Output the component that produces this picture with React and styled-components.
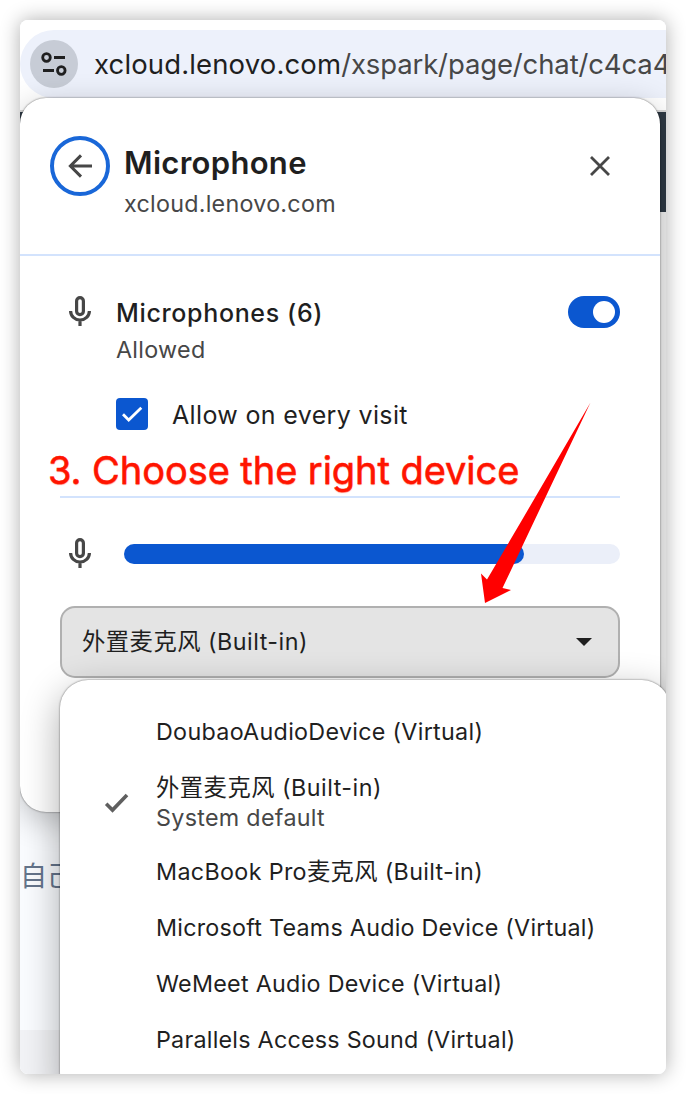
import React from "react";
import styled, { createGlobalStyle } from "styled-components";

const GlobalStyle = createGlobalStyle`
  * { box-sizing: border-box; }
  body {
    margin: 0;
    background: #fff;
    font-family: Inter, "Noto Sans CJK SC", sans-serif;
    color: #1f1f1f;
  }
`;

const Page = styled.main`
  width: 686px;
  height: 1094px;
  padding: 20px;
  overflow: hidden;
`;

const Frame = styled.section`
  position: relative;
  width: 646px;
  height: 1054px;
  border-radius: 8px;
  box-shadow: 0 0 20px rgba(0, 0, 0, 0.32);
`;

const Viewport = styled.div`
  position: relative;
  height: 100%;
  border-radius: 8px;
  overflow: hidden;
  display: flex;
  flex-direction: column;
  background: #f8f9fd;
`;

const Toolbar = styled.header`
  flex: none;
  height: 92px;
  padding-top: 10px;
  background: #fff;
  border-bottom: 2px solid #d6d6d6;
`;

const AddressBar = styled.div`
  width: 760px;
  height: 68px;
  padding-left: 10px;
  display: flex;
  align-items: center;
  gap: 16px;
  border-radius: 34px 0 0 34px;
  background: #edf1fb;
`;

const SiteButton = styled.div`
  width: 48px;
  height: 48px;
  border-radius: 50%;
  background: #c7ccd6;
`;

const Text = styled.span`
  display: block;
  white-space: nowrap;
  font-size: ${(p) => p.$size || 23.3}px;
  line-height: ${(p) => p.$line || 30}px;
  font-weight: ${(p) => p.$weight || 400};
  letter-spacing: ${(p) => p.$track || 0}px;
  color: ${(p) => p.$color || "#1f1f1f"};
`;

const Muted = styled.span`
  color: #474747;
  letter-spacing: -0.13px;
`;

const SiteHeader = styled.div`
  flex: none;
  height: 100px;
  background: #2e3944;
`;

const SiteBody = styled.div`
  flex: 1;
  padding-top: 646px;
  padding-left: 0;
  background: linear-gradient(#f1f1f1 0 480px, #fafcff 600px);
`;

const SiteFooter = styled.div`
  flex: none;
  height: 44px;
  background: #f2f3f6;
`;

const Dialog = styled.div`
  position: absolute;
  left: 0;
  top: 78px;
  width: 640px;
  height: 714px;
  border-radius: 26px;
  background: #fff;
  box-shadow: 0 0 2px rgba(0, 0, 0, 0.6), 0 8px 32px rgba(0, 0, 0, 0.24);
`;

const DialogHeader = styled.div`
  height: 158px;
  padding: 38px 40px 0 30px;
  display: flex;
  align-items: flex-start;
  border-bottom: 2px solid #d3e3fd;
`;

const BackButton = styled.div`
  width: 60px;
  height: 60px;
  margin-right: 14px;
  display: grid;
  place-items: center;
  border: 4px solid #1967d8;
  border-radius: 50%;
`;

const Titles = styled.div`
  flex: 1;
  padding-top: 7px;
`;

const CloseButton = styled.div`
  width: 40px;
  height: 60px;
  display: grid;
  place-items: center;
`;

const DialogBody = styled.div`
  padding: 40px 40px 0;
`;

const PermissionRow = styled.div`
  display: flex;
  align-items: flex-start;
  height: 70px;
`;

const IconCell = styled.div`
  width: 40px;
  height: 30px;
  margin-right: ${(p) => p.$gap}px;
  display: flex;
  justify-content: center;
`;

const Labels = styled.div`
  flex: 1;
`;

const Toggle = styled.div`
  width: 52px;
  height: 32px;
  padding: 5px;
  display: flex;
  justify-content: flex-end;
  border-radius: 16px;
  background: #0b57d0;
`;

const Knob = styled.div`
  width: 22px;
  height: 22px;
  border-radius: 50%;
  background: #fff;
`;

const CheckRow = styled.div`
  height: 32px;
  margin: 32px 0 0 56px;
  display: flex;
  align-items: flex-start;
  gap: 24px;
`;

const CheckBox = styled.div`
  width: 32px;
  height: 32px;
  border-radius: 4px;
  background: #0b57d0;
`;

const Divider = styled.div`
  height: 2px;
  margin-top: 66px;
  background: #d3e3fd;
`;

const LevelRow = styled.div`
  margin-top: 40px;
  display: flex;
  align-items: flex-start;
  height: 32px;
`;

const LevelTrack = styled.div`
  flex: 1;
  height: 20px;
  margin-top: 6px;
  border-radius: 10px;
  background: #ebeff9;
`;

const LevelFill = styled.div`
  width: 400px;
  height: 20px;
  border-radius: 10px;
  background: #0b57d0;
`;

const Select = styled.div`
  height: 72px;
  margin-top: 36px;
  padding: 0 26px 0 20px;
  display: flex;
  align-items: center;
  justify-content: space-between;
  border: 2px solid #b0b0b0;
  border-radius: 15px;
  background: #e4e4e4;
`;

const Menu = styled.div`
  position: absolute;
  left: 40px;
  top: 660px;
  width: 610px;
  height: 420px;
  padding-top: 24px;
  border-radius: 28px;
  background: #fff;
  box-shadow: 0 0 2px rgba(0, 0, 0, 0.6), 0 12px 38px rgba(0, 0, 0, 0.33);
`;

const MenuItem = styled.div`
  height: ${(p) => (p.$tall ? 84 : 56)}px;
  padding-top: ${(p) => (p.$tall ? 2 : 0)}px;
  padding-left: 44px;
  display: flex;
  align-items: center;
`;

const MenuMark = styled.div`
  width: 52px;
  display: flex;
`;

const Caption = styled.div`
  position: absolute;
  left: 28px;
  top: 425px;
  -webkit-text-stroke: 0.5px #ff1400;
  text-shadow: 0 1px 1px rgba(255, 30, 0, 0.45);
`;

const Pointer = styled.svg`
  position: absolute;
  left: 450px;
  top: 375px;
`;

function MicIcon() {
  return (
    <svg width="24" height="30" viewBox="0 0 24 30" fill="none" stroke="#474747" strokeWidth="3.2">
      <rect x="8.6" y="1.6" width="6.8" height="17" rx="3.4" />
      <path d="M2.6 15a9.4 9 0 0 0 18.8 0M12 24V30" />
    </svg>
  );
}

const devices = [
  { name: "DoubaoAudioDevice (Virtual)", track: 0.3 },
  { name: "外置麦克风 (Built-in)", note: "System default", track: 0.5 },
  { name: "MacBook Pro麦克风 (Built-in)", track: 0.34 },
  { name: "Microsoft Teams Audio Device (Virtual)", track: 0.24 },
  { name: "WeMeet Audio Device (Virtual)", track: 0.28 },
  { name: "Parallels Access Sound (Virtual)", track: 0.24 },
];

export default function App() {
  return (
    <Page>
      <GlobalStyle />
      <Frame>
        <Viewport>
          <Toolbar>
            <AddressBar>
              <SiteButton>
                <svg width="48" height="48" viewBox="0 0 48 48" fill="none" stroke="#1f1f1f" strokeWidth="2.8">
                  <circle cx="16.5" cy="17.5" r="3.8" />
                  <path d="M24 17.5h11M13 30.5h11" />
                  <circle cx="31.3" cy="30.5" r="3.8" />
                </svg>
              </SiteButton>
              <Text $size={27.5} $line={36} $track={0.14}>
                xcloud.lenovo.com<Muted>/xspark/page/chat/c4ca4</Muted>
              </Text>
            </AddressBar>
          </Toolbar>
          <SiteHeader />
          <SiteBody>
            <Text $size={27} $line={38} $color="#64748b">自己</Text>
          </SiteBody>
          <SiteFooter />

          <Dialog>
            <DialogHeader>
              <BackButton>
                <svg width="26" height="24" viewBox="0 0 26 24" fill="none" stroke="#474747" strokeWidth="3">
                  <path d="M25 12H3.4M14 1.4L3.4 12 14 22.6" />
                </svg>
              </BackButton>
              <Titles>
                <Text $size={31} $line={40} $weight={600} $track={0.3}>Microphone</Text>
                <Text $line={42} $color="#474747" $track={0.26}>xcloud.lenovo.com</Text>
              </Titles>
              <CloseButton>
                <svg width="20" height="20" viewBox="0 0 20 20" fill="none" stroke="#474747" strokeWidth="2.8">
                  <path d="M1 1l18 18M19 1L1 19" />
                </svg>
              </CloseButton>
            </DialogHeader>
            <DialogBody>
              <PermissionRow>
                <IconCell $gap={16}><MicIcon /></IconCell>
                <Labels>
                  <Text $size={25} $line={34} $weight={500} $track={0.65}>Microphones (6)</Text>
                  <Text $line={40} $color="#474747" $track={0.3}>Allowed</Text>
                </Labels>
                <Toggle><Knob /></Toggle>
              </PermissionRow>
              <CheckRow>
                <CheckBox>
                  <svg width="32" height="32" viewBox="0 0 32 32" fill="none" stroke="#fff" strokeWidth="2.8">
                    <path d="M7 16.3l5.7 5.7L25.3 9.7" />
                  </svg>
                </CheckBox>
                <Text $size={25} $line={34} $track={0.35}>Allow on every visit</Text>
              </CheckRow>
              <Divider />
              <LevelRow>
                <IconCell $gap={24}><MicIcon /></IconCell>
                <LevelTrack><LevelFill /></LevelTrack>
              </LevelRow>
              <Select>
                <Text $track={0.5}>外置麦克风 (Built-in)</Text>
                <svg width="16" height="8" viewBox="0 0 16 8"><path d="M0 0h16L8 8z" fill="#1f1f1f" /></svg>
              </Select>
            </DialogBody>
          </Dialog>

          <Menu>
            {devices.map((d) => (
              <MenuItem key={d.name} $tall={!!d.note}>
                <MenuMark>
                  {d.note && (
                    <svg width="26" height="20" viewBox="0 0 26 20" fill="none" stroke="#5f5f5f" strokeWidth="3.6">
                      <path d="M2.2 10.8l6.3 6.3L23 2" />
                    </svg>
                  )}
                </MenuMark>
                <div>
                  <Text $track={d.track}>{d.name}</Text>
                  {d.note && <Text $color="#474747" $track={0.3}>{d.note}</Text>}
                </div>
              </MenuItem>
            ))}
          </Menu>

          <Caption>
            <Text $size={38} $line={50} $color="#ff1400" $track={-0.06}>3. Choose the right device</Text>
          </Caption>
          <Pointer width="130" height="215" viewBox="470 395 130 215">
            <path d="M590.5 402.5L534.7 520L502.5 588L511 590L485 603L481 573.5L487 579.5L522 520Z" fill="#f00" />
          </Pointer>
        </Viewport>
      </Frame>
    </Page>
  );
}
